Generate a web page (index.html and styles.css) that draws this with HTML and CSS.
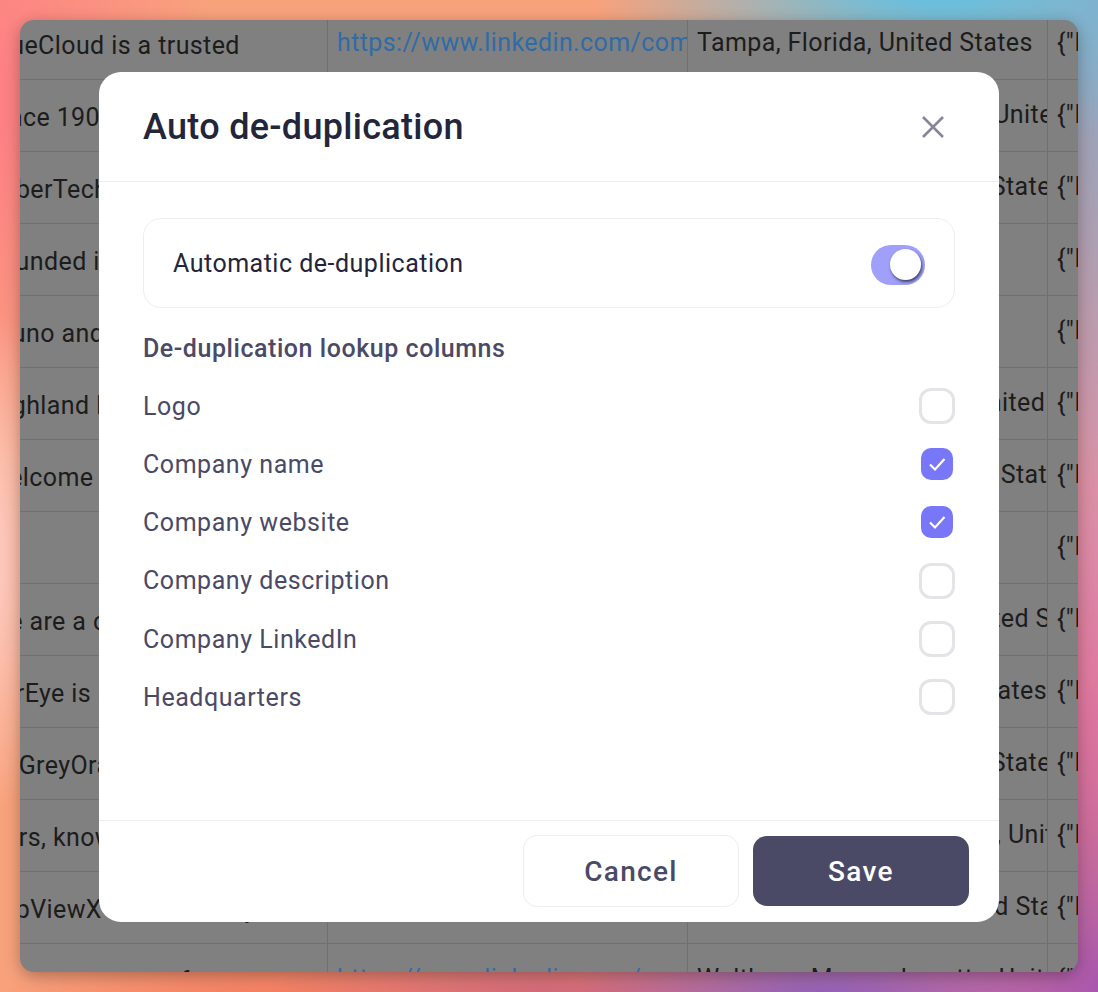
FILE: index.html
```html
<!DOCTYPE html>
<html lang="en">
<head>
  <meta charset="UTF-8">
  <meta name="viewport" content="width=device-width, initial-scale=1.0">
  <title>Auto de-duplication</title>
  <link rel="stylesheet" href="styles.css">
</head>
<body>
  <div class="window">
    <!-- table behind the dialog -->
    <div class="table">
      <div class="row"><div class="cell first">TrueCloud is a trusted</div><div class="cell link">https://www.linkedin.com/company/truecloud</div><div class="cell">Tampa, Florida, United States</div><div class="cell">{"Industry"</div></div>
      <div class="row"><div class="cell first">Since 1903 we build</div><div class="cell"></div><div class="cell">Middletown, Connecticut, United States</div><div class="cell">{"Industry"</div></div>
      <div class="row"><div class="cell first">CyberTech is a leader</div><div class="cell"></div><div class="cell">Fresno, California, United States</div><div class="cell">{"Industry"</div></div>
      <div class="row"><div class="cell first">Founded in 2012</div><div class="cell"></div><div class="cell"></div><div class="cell">{"Industry"</div></div>
      <div class="row"><div class="cell first">Bruno and partners</div><div class="cell"></div><div class="cell"></div><div class="cell">{"Industry"</div></div>
      <div class="row"><div class="cell first">Highland Park group</div><div class="cell"></div><div class="cell">Highland Park, Georgia, United States</div><div class="cell">{"Industry"</div></div>
      <div class="row"><div class="cell first">Welcome to our team</div><div class="cell"></div><div class="cell">Antioch, California, United States</div><div class="cell">{"Industry"</div></div>
      <div class="row"><div class="cell first"></div><div class="cell"></div><div class="cell"></div><div class="cell">{"Industry"</div></div>
      <div class="row"><div class="cell first">We are a community</div><div class="cell"></div><div class="cell">San Mateo, California, United States</div><div class="cell">{"Industry"</div></div>
      <div class="row"><div class="cell first">TorEye is a platform</div><div class="cell"></div><div class="cell">Evans, Colorado, United States</div><div class="cell">{"Industry"</div></div>
      <div class="row"><div class="cell first">At GreyOrange we</div><div class="cell"></div><div class="cell">Fresno, California, United States</div><div class="cell">{"Industry"</div></div>
      <div class="row"><div class="cell first">Ours, known for</div><div class="cell"></div><div class="cell">Newport Beach, California, United States</div><div class="cell">{"Industry"</div></div>
      <div class="row"><div class="cell first">TopViewX is a directory</div><div class="cell"></div><div class="cell">Franklin, Tennessee, United States</div><div class="cell">{"Industry"</div></div>
      <div class="row"><div class="cell first">We are a group of users</div><div class="cell link">https://www.linkedin.com/company/waltham</div><div class="cell">Waltham, Massachusetts, United States</div><div class="cell">{"Industry"</div></div>
    </div>

    <!-- dialog -->
    <div class="overlay">
      <div class="modal">
        <div class="modal-header">
          <h1>Auto de-duplication</h1>
          <svg class="close-icon" viewBox="0 0 24 24" aria-label="Close"><path d="M2 2L22 22M22 2L2 22"/></svg>
        </div>

        <div class="modal-body">
          <div class="auto-card">
            <span>Automatic de-duplication</span>
            <div class="toggle"><div class="toggle-knob"></div></div>
          </div>

          <h2>De-duplication lookup columns</h2>

          <div class="columns">
            <div class="column-row"><span>Logo</span><div class="checkbox"></div></div>
            <div class="column-row"><span>Company name</span>
              <div class="checkbox checked"><svg viewBox="0 0 32 32"><path d="M9 16.5L14 21.5L23.5 11"/></svg></div>
            </div>
            <div class="column-row"><span>Company website</span>
              <div class="checkbox checked"><svg viewBox="0 0 32 32"><path d="M9 16.5L14 21.5L23.5 11"/></svg></div>
            </div>
            <div class="column-row"><span>Company description</span><div class="checkbox"></div></div>
            <div class="column-row"><span>Company LinkedIn</span><div class="checkbox"></div></div>
            <div class="column-row"><span>Headquarters</span><div class="checkbox"></div></div>
          </div>
        </div>

        <div class="modal-footer">
          <button class="btn btn-cancel">Cancel</button>
          <button class="btn btn-save">Save</button>
        </div>
      </div>
    </div>
  </div>
</body>
</html>
```

FILE: styles.css
```css
body {
  margin: 0;
  height: 992px;
  padding: 20px;
  box-sizing: border-box;
  overflow: hidden;
  font-family: Roboto, Arial, sans-serif;
  background-color: #f8a27c;
  background-image:
    radial-gradient(ellipse 340px 190px at 930px -30px, #50c4ee 0%, rgba(80,196,238,0) 100%),
    radial-gradient(ellipse 260px 400px at 1160px 100px, #80a4cc 0%, rgba(128,164,204,0) 100%),
    radial-gradient(ellipse 220px 400px at 1160px 460px, #d08cb8 0%, rgba(208,140,184,0) 100%),
    radial-gradient(ellipse 320px 320px at 1130px 1000px, #a04cb4 0%, rgba(160,76,180,0) 100%),
    radial-gradient(ellipse 220px 260px at 1160px 690px, #e2579c 0%, rgba(226,87,156,0) 100%),
    radial-gradient(ellipse 260px 160px at 830px 1030px, #7850c8 0%, rgba(120,80,200,0) 100%),
    radial-gradient(ellipse 300px 120px at 560px 1020px, #c85a78 0%, rgba(200,90,120,0) 100%),
    radial-gradient(ellipse 300px 100px at 280px 1020px, #f4745a 0%, rgba(244,116,90,0) 100%),
    radial-gradient(ellipse 110px 260px at -30px 560px, #ffd6d4 0%, rgba(255,214,212,0) 100%),
    radial-gradient(ellipse 260px 360px at -40px 100px, #ff7a86 0%, rgba(255,122,134,0) 100%);
}

.window {
  position: relative;
  height: 952px;
  border-radius: 14px;
  overflow: hidden;
  background-color: #808080;
  box-shadow: 0 4px 16px rgba(0,0,0,0.3);
}

/* table behind the dialog */
.table {
  margin-top: -12px;
  margin-left: -42px;
  width: 1500px;
  color: #1c1c1c;
  font-size: 25px;
  letter-spacing: 0.4px;
}

.row {
  display: grid;
  grid-template-columns: 350px 360px 360px 360px;
  height: 72px;
  box-sizing: border-box;
  border-bottom: 1px solid #707070;
}

.cell {
  display: flex;
  align-items: center;
  padding-left: 9px;
  padding-bottom: 3px;
  border-right: 1px solid #707070;
  white-space: nowrap;
  overflow: hidden;
}

.cell.first {
  padding-top: 4px;
  padding-bottom: 0;
}

.cell.link {
  color: #2f6ca6;
}

.overlay {
  position: absolute;
  top: 0;
  left: 0;
  right: 0;
  bottom: 0;
  display: flex;
  justify-content: center;
  padding-top: 52px;
}

.modal {
  display: flex;
  flex-direction: column;
  box-sizing: border-box;
  width: 900px;
  height: 850px;
  background-color: white;
  border-radius: 22px;
}

.modal-header {
  display: flex;
  align-items: center;
  justify-content: space-between;
  height: 110px;
  box-sizing: border-box;
  padding: 0 54px 0 44px;
  border-bottom: 1px solid #eeeef2;
}

h1 {
  margin: 0;
  color: #23253a;
  font-size: 36px;
  font-weight: 500;
  letter-spacing: 0.3px;
}

.close-icon {
  width: 24px;
  height: 24px;
  fill: none;
  stroke: #86859a;
  stroke-width: 2.6;
}

.modal-body {
  flex: 1;
  padding: 36px 44px 0;
}

.auto-card {
  display: flex;
  align-items: center;
  justify-content: space-between;
  height: 90px;
  box-sizing: border-box;
  padding: 0 29px;
  border: 1px solid #eeeef2;
  border-radius: 18px;
  color: #23253a;
  font-size: 25px;
  letter-spacing: 0.5px;
}

.toggle {
  display: flex;
  align-items: center;
  justify-content: flex-end;
  width: 54px;
  height: 40px;
  margin-top: 3px;
  box-sizing: border-box;
  padding-right: 4px;
  border-radius: 20px;
  background-color: #a0a0fb;
}

.toggle-knob {
  width: 31px;
  height: 31px;
  border-radius: 50%;
  background-color: white;
  box-shadow: 1px 2px 3px rgba(40,40,70,0.8);
}

h2 {
  margin: 25px 0 0;
  color: #4b4a66;
  font-size: 25px;
  font-weight: 500;
  letter-spacing: 0.55px;
  line-height: 32px;
}

.columns {
  margin-top: 12.3px;
}

.column-row {
  display: flex;
  align-items: center;
  justify-content: space-between;
  height: 58.2px;
  color: #4b4a66;
  font-size: 25px;
  letter-spacing: 0.55px;
}

.checkbox {
  width: 36px;
  height: 36px;
  box-sizing: border-box;
  border: 3px solid #e4e4e8;
  border-radius: 12px;
}

.checkbox.checked {
  width: 32px;
  height: 32px;
  margin-right: 2px;
  margin-bottom: 1px;
  border: none;
  border-radius: 10px;
  background-color: #7777f7;
}

.checkbox svg {
  display: block;
  fill: none;
  stroke: white;
  stroke-width: 2.2;
}

.modal-footer {
  display: flex;
  justify-content: flex-end;
  align-items: center;
  gap: 14px;
  height: 102px;
  box-sizing: border-box;
  padding: 0 30px 2px 0;
  border-top: 1px solid #eeeef2;
}

.btn {
  width: 216px;
  height: 70px;
  padding-top: 2px;
  border-radius: 14px;
  font-family: Roboto, Arial, sans-serif;
  font-size: 28px;
  font-weight: 500;
  letter-spacing: 1.3px;
  cursor: pointer;
}

.btn-cancel {
  height: 72px;
  border: 1px solid #eeeef2;
  background-color: white;
  color: #4b4a66;
}

.btn-save {
  border: none;
  background-color: #4b4a66;
  color: white;
}
```
